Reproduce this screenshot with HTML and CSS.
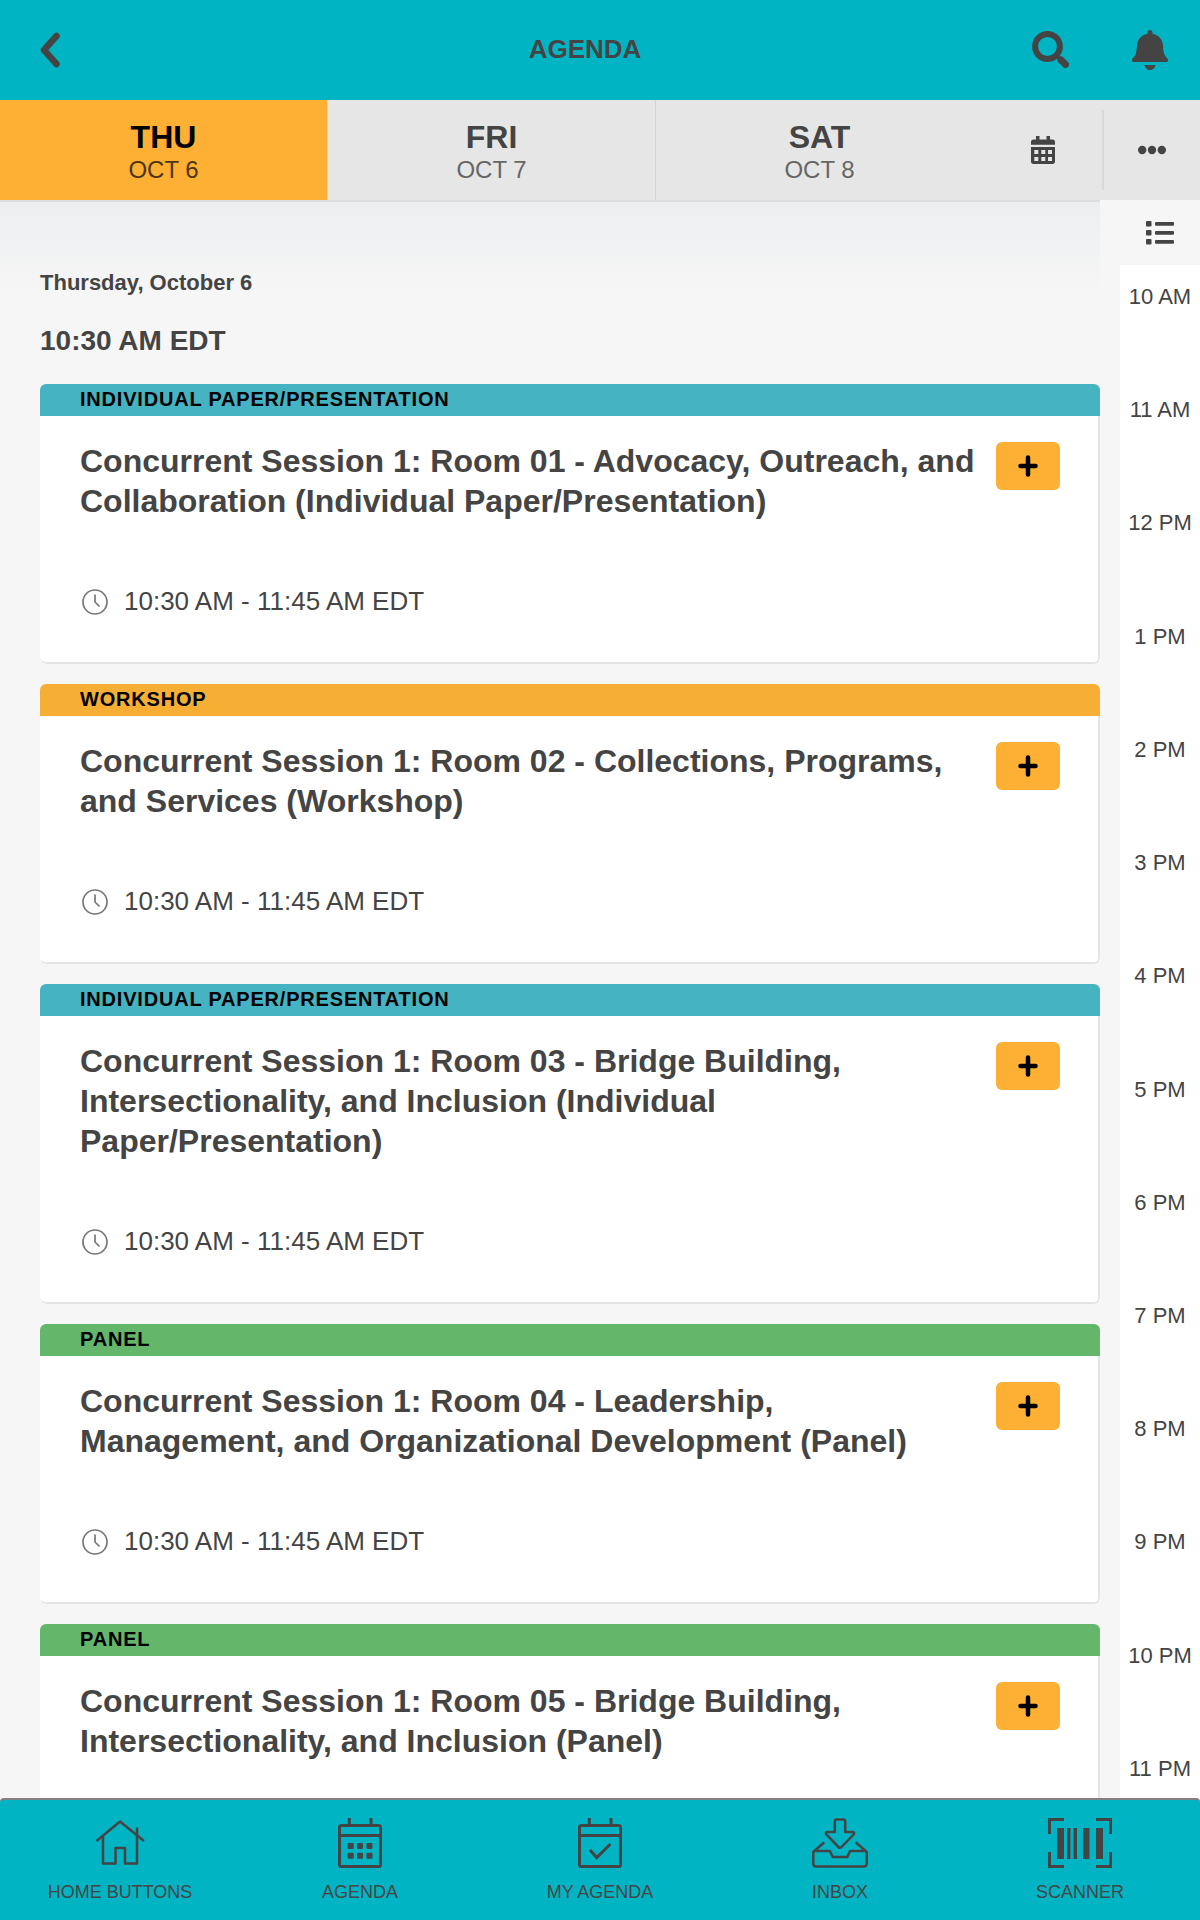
FILE: index.html
```html
<!DOCTYPE html>
<html lang="en">

<head>
    <meta charset="utf-8">
    <meta name="viewport" content="width=device-width, initial-scale=1">
    <title>Agenda</title>
    <link rel="stylesheet" href="styles.css">
</head>

<body>
    <header class="topbar">
        <div class="topbar-side">
            <button class="icon-btn back" type="button" aria-label="Back">
                <svg width="24" height="36" viewBox="0 0 24 36"><path d="M18.500 4L6 18l12.500 14" fill="none" stroke="currentColor" stroke-width="6.500" stroke-linecap="round" stroke-linejoin="round"/></svg>
            </button>
        </div>
        <h1>AGENDA</h1>
        <div class="topbar-side right">
            <button class="icon-btn" type="button" aria-label="Search">
                <svg width="38" height="40" viewBox="0 0 38 40"><circle cx="16.500" cy="16.500" r="12.400" fill="none" stroke="currentColor" stroke-width="6"/><path d="M26 26l3 3" stroke="currentColor" stroke-width="4"/><path d="M30 30l4.500 4.500" stroke="currentColor" stroke-width="7" stroke-linecap="round"/></svg>
            </button>
            <button class="icon-btn" type="button" aria-label="Notifications">
                <svg width="36" height="40" viewBox="0 0 36 40" fill="currentColor"><path d="M18 0c1.500 0 2.500 1 2.500 2.500v1.300C26.500 5 30.500 9.500 31 15c.4 6 .5 9.500 4 13 2.200 2.200 1 4-1 4H2c-2 0-3.200-1.800-1-4 3.500-3.500 3.600-7 4-13C5.500 9.500 9.500 5 15.500 3.800V2.500C15.500 1 16.500 0 18 0zM12.500 35h11c-.6 3.200-2.700 5-5.500 5s-4.900-1.800-5.500-5z"/></svg>
            </button>
        </div>
    </header>

    <nav class="days" aria-label="Days">
        <button class="day active" type="button"><b>THU</b><span>OCT 6</span></button>
        <button class="day" type="button"><b>FRI</b><span>OCT 7</span></button>
        <button class="day" type="button"><b>SAT</b><span>OCT 8</span></button>
        <button class="day-tool" type="button" aria-label="Pick a date">
            <svg width="24" height="28" viewBox="0 0 24 28" fill="currentColor"><path d="M5 0h3.500v3.500h7V0H19v3.500h2.500C23 3.500 24 4.500 24 6v2.700H0V6c0-1.500 1-2.500 2.500-2.500H5z"/><path fill-rule="evenodd" d="M0 11h24v14.500c0 1.500-1 2.500-2.500 2.500h-19C1 28 0 27 0 25.500zM3.300 14v4h4v-4zm7 0v4h4v-4zm6.700 0v4h4v-4zM3.300 21v4h4v-4zm7 0v4h4v-4zm6.700 0v4h4v-4z"/></svg>
        </button>
        <button class="day-more" type="button" aria-label="More">
            <svg width="28" height="10" viewBox="0 0 28 10" fill="currentColor"><circle cx="4.200" cy="5" r="4.200"/><circle cx="14" cy="5" r="4.200"/><circle cx="23.800" cy="5" r="4.200"/></svg>
        </button>
    </nav>

    <div class="content">
        <main class="sessions">
            <h2 class="date">Thursday, October 6</h2>
            <h3 class="slot">10:30 AM EDT</h3>

            <article class="card">
                <div class="tag paper">INDIVIDUAL PAPER/PRESENTATION</div>
                <div class="card-body">
                    <div class="card-head">
                        <h4>Concurrent Session 1: Room 01 - Advocacy, Outreach, and Collaboration (Individual Paper/Presentation)</h4>
                        <button class="add" type="button" aria-label="Add"><svg width="20" height="22"><use href="#plus"/></svg></button>
                    </div>
                    <div class="time"><svg width="26" height="26"><use href="#clock"/></svg>10:30 AM - 11:45 AM EDT</div>
                </div>
            </article>

            <article class="card">
                <div class="tag workshop">WORKSHOP</div>
                <div class="card-body">
                    <div class="card-head">
                        <h4>Concurrent Session 1: Room 02 - Collections, Programs, and Services (Workshop)</h4>
                        <button class="add" type="button" aria-label="Add"><svg width="20" height="22"><use href="#plus"/></svg></button>
                    </div>
                    <div class="time"><svg width="26" height="26"><use href="#clock"/></svg>10:30 AM - 11:45 AM EDT</div>
                </div>
            </article>

            <article class="card">
                <div class="tag paper">INDIVIDUAL PAPER/PRESENTATION</div>
                <div class="card-body">
                    <div class="card-head">
                        <h4>Concurrent Session 1: Room 03 - Bridge Building, Intersectionality, and Inclusion (Individual Paper/Presentation)</h4>
                        <button class="add" type="button" aria-label="Add"><svg width="20" height="22"><use href="#plus"/></svg></button>
                    </div>
                    <div class="time"><svg width="26" height="26"><use href="#clock"/></svg>10:30 AM - 11:45 AM EDT</div>
                </div>
            </article>

            <article class="card">
                <div class="tag panel">PANEL</div>
                <div class="card-body">
                    <div class="card-head">
                        <h4>Concurrent Session 1: Room 04 - Leadership, Management, and Organizational Development (Panel)</h4>
                        <button class="add" type="button" aria-label="Add"><svg width="20" height="22"><use href="#plus"/></svg></button>
                    </div>
                    <div class="time"><svg width="26" height="26"><use href="#clock"/></svg>10:30 AM - 11:45 AM EDT</div>
                </div>
            </article>

            <article class="card">
                <div class="tag panel">PANEL</div>
                <div class="card-body">
                    <div class="card-head">
                        <h4>Concurrent Session 1: Room 05 - Bridge Building, Intersectionality, and Inclusion (Panel)</h4>
                        <button class="add" type="button" aria-label="Add"><svg width="20" height="22"><use href="#plus"/></svg></button>
                    </div>
                </div>
            </article>
        </main>

        <aside class="rail">
            <button class="rail-toggle" type="button" aria-label="List view">
                <svg width="28" height="24" viewBox="0 0 28 24" fill="currentColor"><rect width="5.500" height="5.500" rx="1"/><rect y="9" width="5.500" height="5.500" rx="1"/><rect y="18" width="5.500" height="5.500" rx="1"/><rect x="9" y="1" width="19" height="3.800" rx="1"/><rect x="9" y="10" width="19" height="3.800" rx="1"/><rect x="9" y="19" width="19" height="3.800" rx="1"/></svg>
            </button>
            <div class="hours">
                <a href="#">10 AM</a>
                <a href="#">11 AM</a>
                <a href="#">12 PM</a>
                <a href="#">1 PM</a>
                <a href="#">2 PM</a>
                <a href="#">3 PM</a>
                <a href="#">4 PM</a>
                <a href="#">5 PM</a>
                <a href="#">6 PM</a>
                <a href="#">7 PM</a>
                <a href="#">8 PM</a>
                <a href="#">9 PM</a>
                <a href="#">10 PM</a>
                <a href="#">11 PM</a>
            </div>
        </aside>
    </div>

    <nav class="bottom" aria-label="Main">
        <a href="#">
            <svg width="64" height="50" fill="none" stroke="currentColor" stroke-width="2.500" stroke-linejoin="round"><path d="M8.500 23L32 3.500 56 23"/><path d="M15 18v27.500h12.500V30H37v15.500h12V9.500"/></svg>
            <span>HOME BUTTONS</span>
        </a>
        <a href="#">
            <svg width="64" height="50" fill="none" stroke="currentColor" stroke-width="3"><rect x="11.500" y="7.500" width="41" height="41" rx="2"/><path d="M11.500 17.500h41M21.300 0v7M43 0v7"/><g fill="currentColor" stroke="none"><rect x="19.700" y="25" width="6" height="6" rx="1"/><rect x="29" y="25" width="6" height="6" rx="1"/><rect x="38.500" y="25" width="6" height="6" rx="1"/><rect x="19.700" y="34.700" width="6" height="6" rx="1"/><rect x="29" y="34.700" width="6" height="6" rx="1"/><rect x="38.500" y="34.700" width="6" height="6" rx="1"/></g></svg>
            <span>AGENDA</span>
        </a>
        <a href="#">
            <svg width="64" height="50" fill="none" stroke="currentColor" stroke-width="3"><rect x="11.500" y="7.500" width="41" height="41" rx="2"/><path d="M11.500 17.500h41M21.300 0v7M43 0v7M22 32l6.700 7.500L42.500 26"/></svg>
            <span>MY AGENDA</span>
        </a>
        <a href="#">
            <svg width="64" height="50" fill="none" stroke="currentColor" stroke-width="2.500" stroke-linejoin="round"><path d="M28.500 1.500h7q1.700 0 1.700 1.700V14h7.500q2.300.3 1 2.300L33.500 29Q32 30.500 30.500 29L18.300 16.300q-1.300-2 1-2.300h7.500V3.200q0-1.700 1.700-1.700z"/><path d="M16.300 24.300L5.300 34v11.500q0 3 3 3h47.400q3 0 3-3V34l-11-9.700M6 33h16l2.600 6h14.800l2.600-6h16"/></svg>
            <span>INBOX</span>
        </a>
        <a href="#">
            <svg width="64" height="50" fill="none" stroke="currentColor" stroke-width="3"><path d="M1.500 16V1.500H16M48 1.500h14.500V16M1.500 34v14.500H16M48 48.500h14.500V34"/><path fill="currentColor" stroke="none" d="M9 10h7v31H9zM19 10h3.500v31H19zM25.500 10H29v31h-3.500zM35 10h6.500v31H35zM48 10h7v31h-7z"/></svg>
            <span>SCANNER</span>
        </a>
    </nav>

    <svg class="sprite" aria-hidden="true">
        <symbol id="plus" viewBox="0 0 20 22"><path d="M10 2.500v17M2.500 11h15" fill="none" stroke="currentColor" stroke-width="4.500" stroke-linecap="round"/></symbol>
        <symbol id="clock" viewBox="0 0 26 26"><g fill="none" stroke="currentColor" stroke-width="1.700"><circle cx="13" cy="13" r="12"/><path d="M13 5.500V13l4.500 4.500"/></g></symbol>
    </svg>
</body>

</html>
```

FILE: styles.css
```css
* {
    box-sizing: border-box;
}

body {
    margin: 0;
    height: 100vh;
    display: flex;
    flex-direction: column;
    overflow: hidden;
    background: #f6f6f6;
    color: #444444;
    font-family: "Liberation Sans", Arial, sans-serif;
}

h1, h2, h3, h4 {
    margin: 0;
}

button {
    border: 0;
    padding: 0;
    background: none;
    color: inherit;
    font-family: inherit;
    cursor: pointer;
}

a {
    color: inherit;
    text-decoration: none;
}

svg {
    display: block;
}

.sprite {
    display: none;
}

/* top bar */
.topbar {
    flex: none;
    display: flex;
    align-items: center;
    height: 100px;
    background: #00b4c4;
}

.topbar-side {
    display: flex;
    width: 170px;
}

.topbar-side.right {
    width: 200px;
}

.topbar h1 {
    flex: 1;
    text-align: center;
    font-size: 26px;
    line-height: 32px;
    padding-bottom: 2px;
}

.icon-btn {
    display: flex;
    align-items: center;
    justify-content: center;
    width: 100px;
    height: 100px;
}

/* day tabs */
.days {
    flex: none;
    display: flex;
    height: 100px;
    background: #e6e6e6;
}

.day {
    flex: 1;
    display: flex;
    flex-direction: column;
    align-items: center;
    justify-content: center;
    padding-top: 4px;
    border-right: 1px solid #d4d4d4;
}

.day.active {
    background: #fdb034;
    color: #000000;
}

.day:nth-child(3) {
    border-right-color: #e6e6e6;
}

.day b {
    font-size: 32px;
    line-height: 36px;
}

.day span {
    font-size: 24px;
    line-height: 30px;
    color: #666666;
}

.day.active span {
    color: #4c3510;
}

.day-tool,
.day-more {
    display: flex;
    align-items: center;
    justify-content: center;
    width: 118px;
}

.day-more {
    width: 98px;
    height: 80px;
    align-self: center;
    border-left: 2px solid #d8d8d8;
}

/* content */
.content {
    flex: 1;
    min-height: 0;
    display: flex;
}

.sessions {
    flex: 1;
    min-width: 0;
    overflow: hidden;
    border-top: 2px solid #dedede;
    padding: 65px 0 0 40px;
    background: linear-gradient(#eceef0, #f6f6f6 90px);
}

.date {
    font-size: 22px;
    line-height: 32px;
}

.slot {
    margin: 24px 0 25px;
    font-size: 28px;
    line-height: 36px;
}

.card {
    margin-bottom: 20px;
    border-radius: 6px;
    background: #ffffff;
    overflow: hidden;
}

.tag {
    padding: 0 40px;
    height: 32px;
    font-size: 20px;
    font-weight: bold;
    line-height: 30px;
    letter-spacing: 0.04em;
    color: #000000;
}

.paper {
    background: #45b3c2;
}

.workshop {
    background: #f6af34;
}

.panel {
    background: #63b66a;
}

.card-body {
    padding: 25px 38px 44px 40px;
    border: solid #e4e4e4;
    border-width: 0 2px 2px 0;
    border-radius: 0 0 6px 6px;
}

.card-head {
    display: flex;
    align-items: flex-start;
    gap: 16px;
}

.card-head h4 {
    flex: 1;
    font-size: 32px;
    line-height: 40px;
}

.add {
    display: flex;
    align-items: center;
    justify-content: center;
    width: 64px;
    height: 48px;
    margin-top: 1px;
    border-radius: 6px;
    background: #fdb034;
    color: #000000;
}

.time {
    display: flex;
    align-items: center;
    gap: 16px;
    margin-top: 64px;
    padding-left: 2px;
    font-size: 26px;
    line-height: 33px;
}

.time svg {
    color: #777777;
}

/* hour rail */
.rail {
    display: flex;
    flex-direction: column;
    width: 100px;
    background: #f6f6f6;
}

.rail-toggle {
    display: flex;
    align-items: center;
    justify-content: center;
    height: 65px;
    padding-left: 20px;
}

.hours {
    flex: 1;
    display: flex;
    flex-direction: column;
    justify-content: space-between;
    margin-left: 20px;
    padding: 16px 0 13px;
    background: #ffffff;
    font-size: 22px;
    line-height: 32px;
    text-align: center;
}

/* bottom bar */
.bottom {
    flex: none;
    display: flex;
    height: 122px;
    padding-top: 18px;
    border-top: 2px solid #85807f;
    border-radius: 4px 4px 0 0;
    background: #00b4c4;
}

.bottom a {
    flex: 1;
    display: flex;
    flex-direction: column;
    align-items: center;
    gap: 12px;
    font-size: 18px;
    line-height: 24px;
}
```
